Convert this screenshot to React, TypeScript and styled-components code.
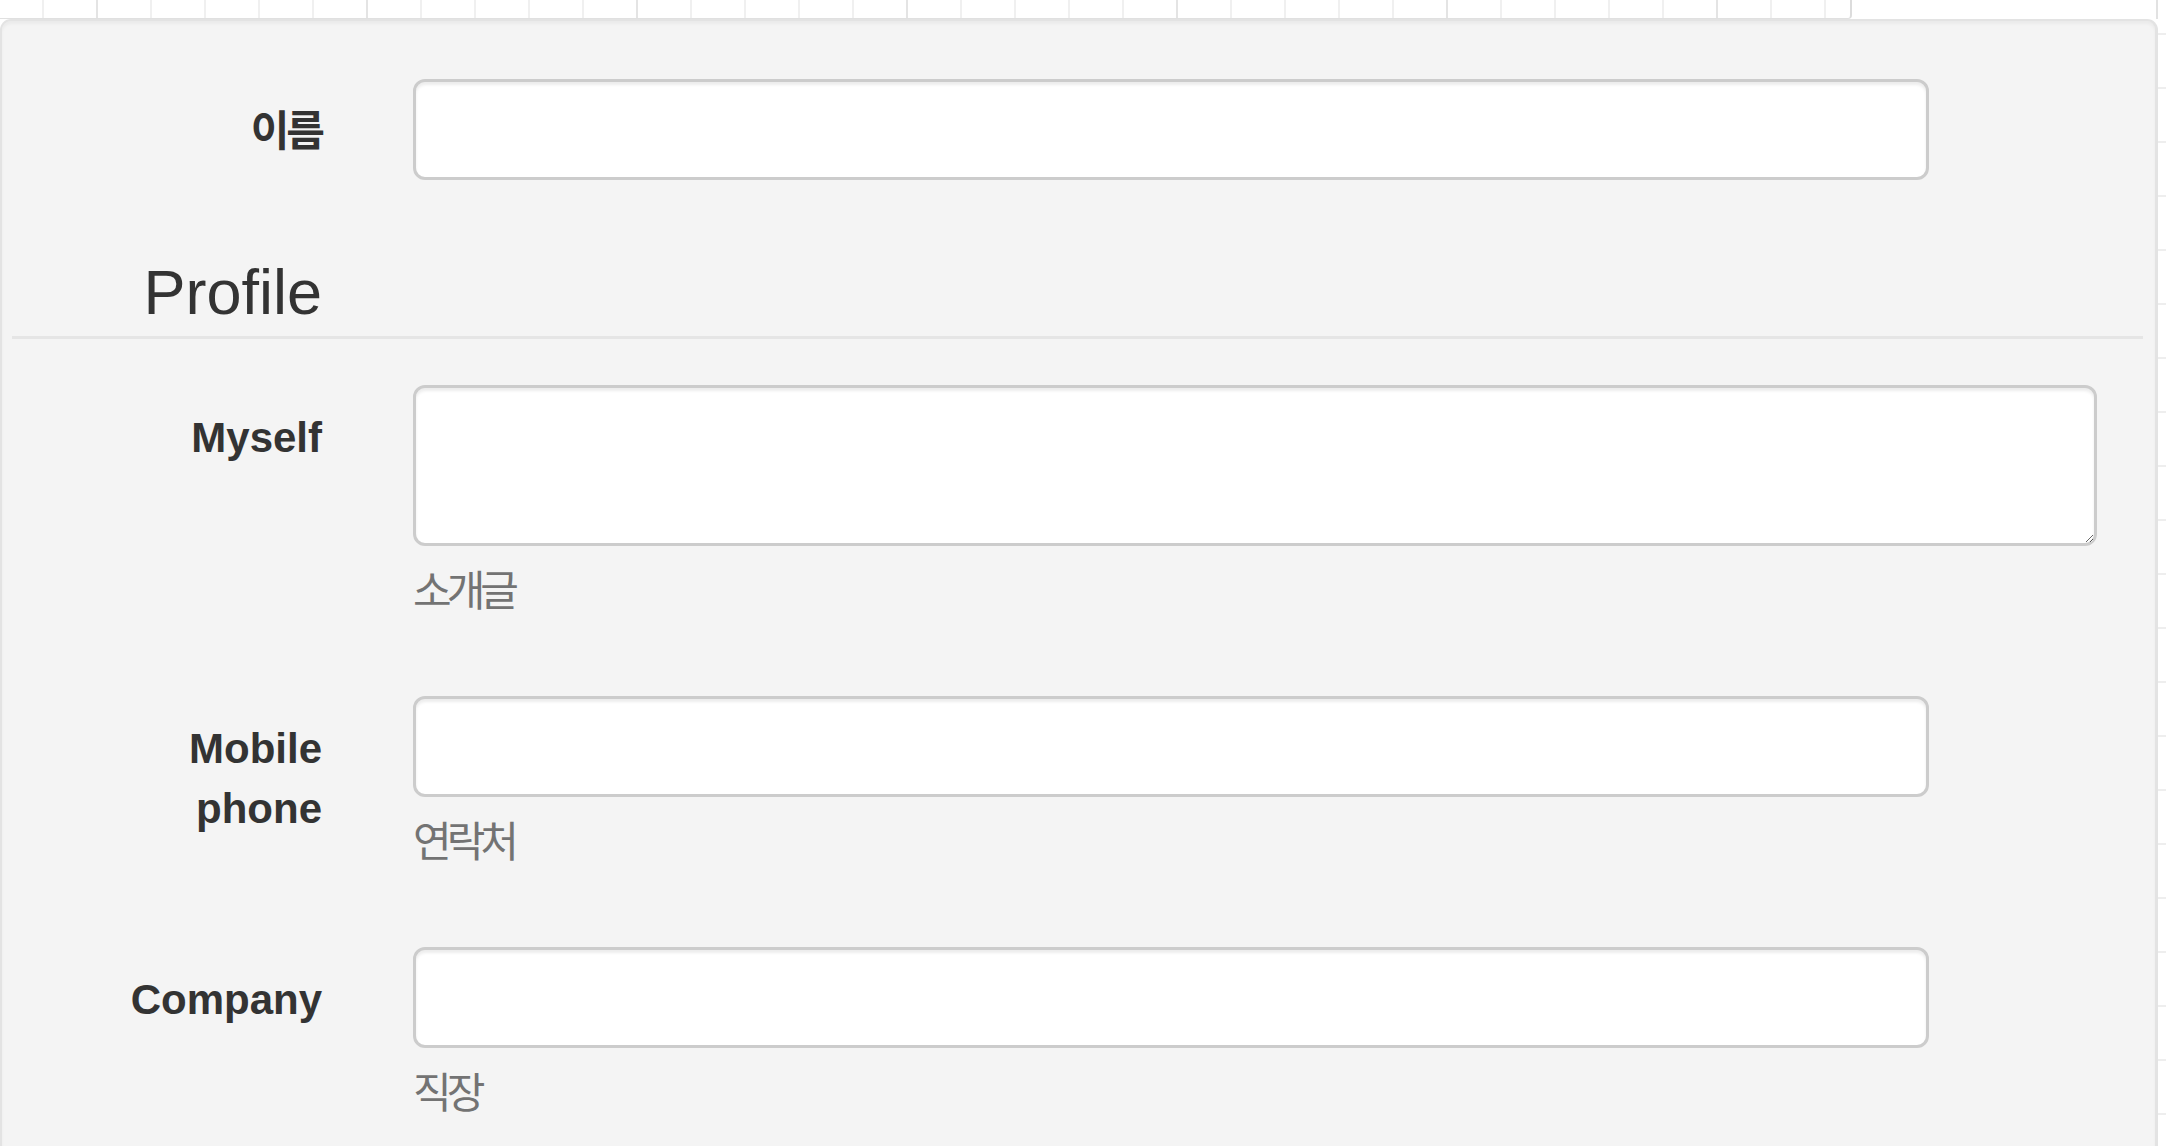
import React from "react";
import styled, { createGlobalStyle } from "styled-components";

const GlobalStyle = createGlobalStyle`
  html, body { margin: 0; padding: 0; background: #fff; }
  body {
    font-family: "Liberation Sans", Arial, "Noto Sans CJK KR", sans-serif;
    color: #333;
  }
  *, *::before, *::after { box-sizing: border-box; }
`;

const Page = styled.div`
  width: 2166px;
  height: 1146px;
  overflow: hidden;
  display: grid;
  grid-template-columns: 2158px 8px;
  grid-template-rows: 19px 1fr;
  background-color: #fff;
  background-image: repeating-linear-gradient(
    180deg,
    transparent 0 33px,
    #eeeeee 33px 35px,
    transparent 35px 54px
  );
`;

const TopRow = styled.div`
  grid-column: 1;
  display: flex;
`;

const CalendarStrip = styled.div`
  width: 1852px;
  height: 19px;
  background-color: #fff;
  background-image:
    repeating-linear-gradient(90deg, transparent 0 96px, #e4e4e4 96px 98px, transparent 98px 270px),
    repeating-linear-gradient(90deg, transparent 0 42px, #f0f0f0 42px 44px, transparent 44px 54px);
  border-right: 2px solid #dcdcdc;
  border-bottom: 1px solid #e0e0e0;
  border-bottom-right-radius: 4px;
`;

const TopBlank = styled.div`
  flex: 1;
  background: #fff;
  border-right: 2px solid #e2e2e2;
`;

const Well = styled.div`
  grid-column: 1;
  background: #f4f4f4;
  border-style: solid;
  border-color: #e3e3e3;
  border-width: 2px 3px 0 2px;
  border-radius: 11px 11px 0 0;
  box-shadow: inset 0 3px 3px rgba(0, 0, 0, 0.04);
  padding: 58px 12px 0 10px;
`;

const Form = styled.form`
  display: flex;
  flex-direction: column;
`;

const FormGroup = styled.div`
  display: grid;
  grid-template-columns: 310px 1fr;
  column-gap: 91px;
  margin-bottom: 45px;
`;

const Label = styled.label<{ $korean?: boolean }>`
  padding: 23px 0 0 45px;
  text-align: right;
  font-weight: 700;
  font-size: 42px;
  line-height: 60px;
  color: #333;
  letter-spacing: ${(p) => (p.$korean ? "-3px" : "normal")};
`;

const Controls = styled.div`
  display: flex;
  flex-direction: column;
  align-items: flex-start;
`;

const fieldBase = `
  display: block;
  margin: 0;
  background: #fff;
  border: 3px solid #cccccc;
  border-radius: 12px;
  box-shadow: inset 0 3px 3px rgba(0, 0, 0, 0.075);
  font-family: "Liberation Sans", Arial, "Noto Sans CJK KR", sans-serif;
  font-size: 42px;
  color: #555;
  outline: none;
`;

const TextInput = styled.input`
  ${fieldBase}
  width: 1516px;
  height: 101px;
  padding: 0 36px;
`;

const TextArea = styled.textarea`
  ${fieldBase}
  width: 1684px;
  height: 161px;
  padding: 18px 36px;
  line-height: 60px;
`;

const HelpBlock = styled.span`
  display: block;
  margin: 16px 0 29px;
  font-size: 42px;
  line-height: 60px;
  color: #737373;
  letter-spacing: -5px;
`;

const Legend = styled.div`
  display: grid;
  grid-template-columns: 310px 1fr;
  margin: 37px 0 46px;
  padding-bottom: 14px;
  border-bottom: 3px solid #e5e5e5;
`;

const LegendText = styled.h2`
  margin: 0;
  text-align: right;
  white-space: nowrap;
  font-size: 63px;
  line-height: 60px;
  font-weight: 400;
  color: #333;
`;

type Field = {
  id: string;
  label: string;
  help: string;
  multiline?: boolean;
};

const profileFields: Field[] = [
  { id: "myself", label: "Myself", help: "소개글", multiline: true },
  { id: "mobile", label: "Mobile phone", help: "연락처" },
  { id: "company", label: "Company", help: "직장" },
];

export default function App() {
  return (
    <>
      <GlobalStyle />
      <Page>
        <TopRow>
          <CalendarStrip />
          <TopBlank />
        </TopRow>
        <Well>
          <Form onSubmit={(e) => e.preventDefault()}>
            <FormGroup>
              <Label htmlFor="name" $korean>
                이름
              </Label>
              <Controls>
                <TextInput id="name" type="text" />
              </Controls>
            </FormGroup>

            <Legend>
              <LegendText>Profile</LegendText>
            </Legend>

            {profileFields.map((f) => (
              <FormGroup key={f.id}>
                <Label htmlFor={f.id}>{f.label}</Label>
                <Controls>
                  {f.multiline ? (
                    <TextArea id={f.id} />
                  ) : (
                    <TextInput id={f.id} type="text" />
                  )}
                  <HelpBlock>{f.help}</HelpBlock>
                </Controls>
              </FormGroup>
            ))}
          </Form>
        </Well>
      </Page>
    </>
  );
}
